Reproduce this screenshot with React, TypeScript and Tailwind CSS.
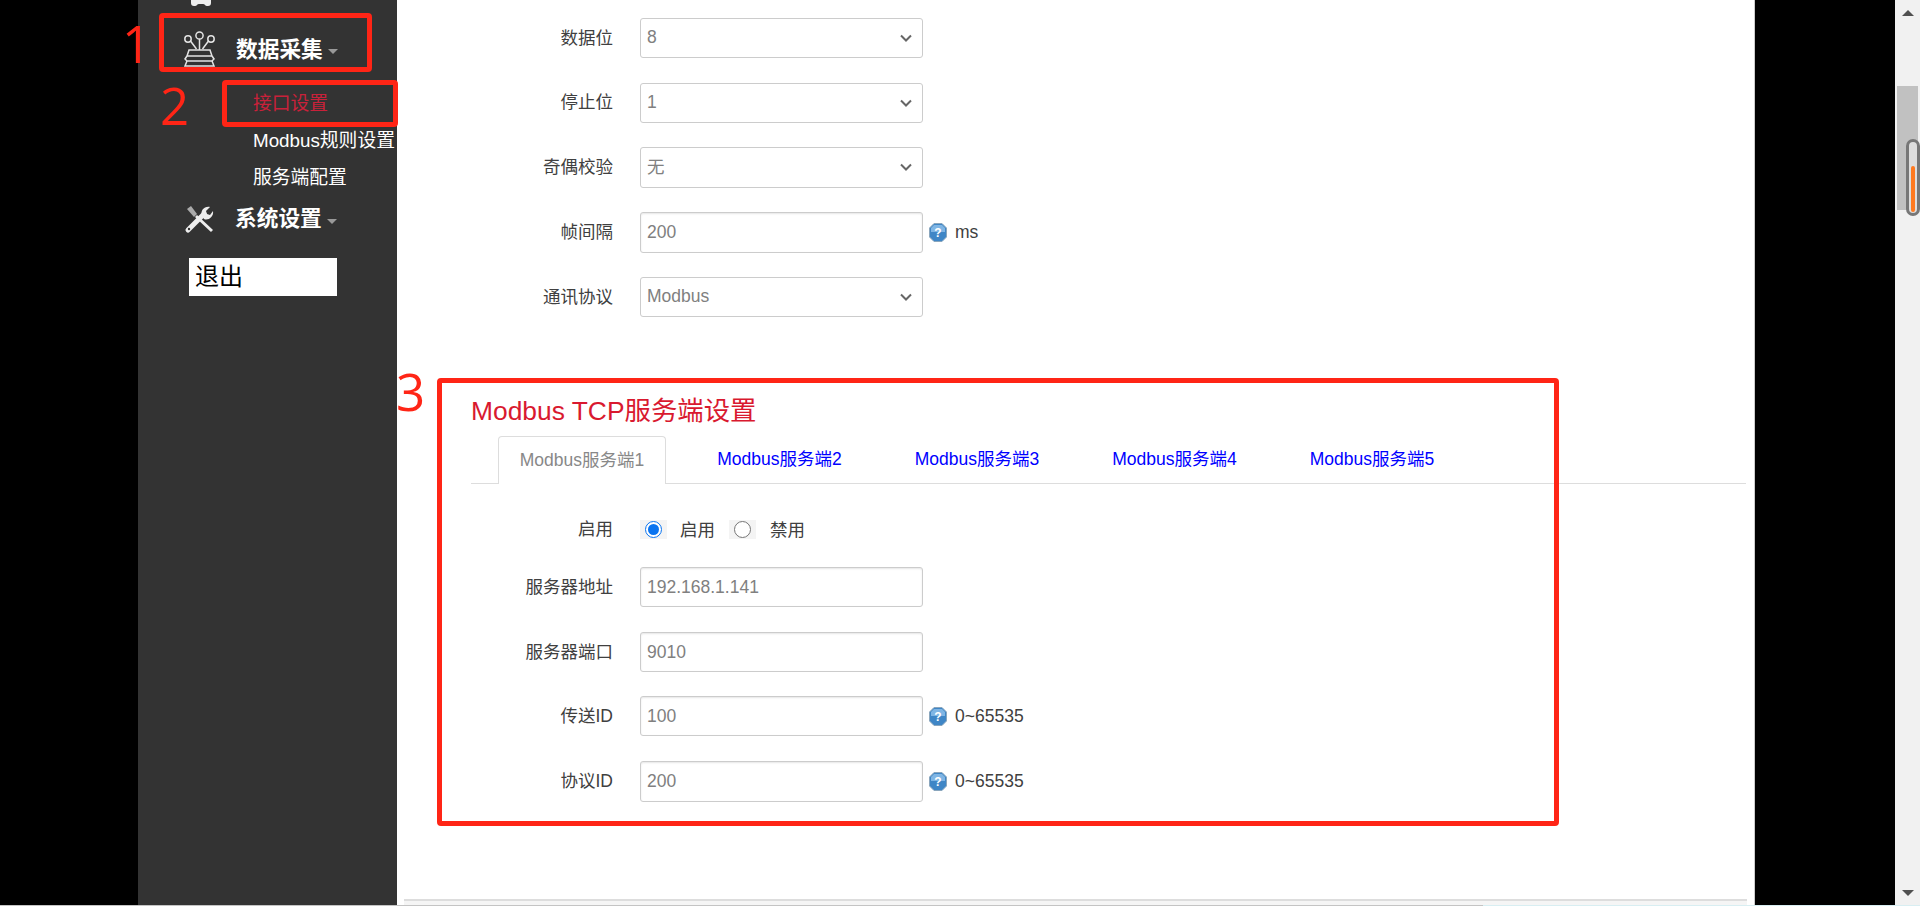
const Chevron = () => (
  <svg width="14" height="9" viewBox="0 0 14 9" fill="none" className="absolute right-[9px] top-1/2 -translate-y-1/2">
    <path d="M2 2l5 5 5-5" stroke="#666" strokeWidth="2" />
  </svg>
);

const HelpIcon = () => (
  <svg width="18" height="19" viewBox="0 0 18 19" className="shrink-0">
    <path d="M5 .5h8L17.5 5v9L13 18.5H5L.5 14V5z" fill="#3f86c6" stroke="#8aa6bd" />
    <path d="M5 2h8l3 3v4H2V5z" fill="#7fb5e4" />
    <text x="9" y="14" textAnchor="middle" fontSize="12" fontWeight="700" fill="#fff" fontFamily="Liberation Sans">?</text>
  </svg>
);

const TopIcon = () => (
  <svg width="22" height="6" viewBox="0 0 22 6" className="shrink-0">
    <path d="M1 0h20v3c0 2-1 3-3 3h-1c-2 0-2-2-4-2H9C7 4 7 6 5 6H4C2 6 1 5 1 3z" fill="#eee" />
  </svg>
);

const CollectIcon = () => (
  <svg width="37" height="36" viewBox="0 0 35 36" fill="none" stroke="#e4e4e4" strokeWidth="1.5" className="shrink-0">
    <circle cx="17.5" cy="4.5" r="3.6" />
    <circle cx="6" cy="8" r="3.2" />
    <circle cx="29" cy="8" r="3.2" />
    <path d="M17.5 8v11M8.5 10l6 8M26.5 10l-6 8" />
    <path d="M7 19h21l2 6H5zM5 25l-2 3 2 2h25l2-2-2-3M5 30l-2 5h29l-2-5" />
  </svg>
);

const ToolsIcon = () => (
  <svg width="30" height="30" viewBox="0 0 30 30" fill="none" className="shrink-0">
    <path d="M4 26L20 10" stroke="#eee" strokeWidth="5" strokeLinecap="round" />
    <path d="M18 12c-2-5 2-10 8-9l-4 4 1 3 3 1 3-4c1 6-5 10-9 8z" fill="#eee" />
    <path d="M3 5l4-3 6 8-3 3z" fill="#aaa" />
    <path d="M12 12l16 15" stroke="#eee" strokeWidth="3" />
    <circle cx="5" cy="25" r="1.2" fill="#333" />
  </svg>
);

const Caret = () => <span className="ml-[5px] mt-[5px] h-0 w-0 border-x-[5px] border-t-[5px] border-x-transparent border-t-[#999]" />;

const Label = ({ children }: { children: string }) => (
  <label className="w-[216px] shrink-0 text-right text-[#404040]">{children}</label>
);

const SelectRow = ({ label, value, h = 'h-10' }: { label: string; value: string; h?: string }) => (
  <div className={`flex items-center gap-[27px] ${h}`}>
    <Label>{label}</Label>
    <div className="relative flex h-full w-[283px] items-center rounded-[3px] border border-[#ccc] bg-white pb-px pl-1.5 text-[#808080]">
      {value}
      <Chevron />
    </div>
  </div>
);

const InputRow = ({ label, value, unit, h = 'h-10' }: { label: string; value: string; unit?: string; h?: string }) => (
  <div className={`flex items-center ${h}`}>
    <Label>{label}</Label>
    <div className="ml-[27px] flex h-full w-[283px] items-center rounded-[3px] border border-[#ccc] bg-white pl-1.5 text-[#808080] shadow-[inset_0_1px_2px_rgba(0,0,0,0.1)]">
      {value}
    </div>
    {unit && (
      <div className="ml-[6px] flex items-center gap-2 text-[#404040]">
        <HelpIcon />
        {unit}
      </div>
    )}
  </div>
);

const Radio = ({ checked }: { checked?: boolean }) => (
  <span className="flex h-[19px] w-[27px] items-center justify-center bg-[#f4f4f4]">
    <span className={`flex h-[17px] w-[17px] items-center justify-center rounded-full border bg-white ${checked ? 'border-[#0a74f0]' : 'border-[#767676]'}`}>
      {checked && <span className="h-[11px] w-[11px] rounded-full bg-[#0a74f0]" />}
    </span>
  </span>
);

const tabs = ['Modbus服务端2', 'Modbus服务端3', 'Modbus服务端4', 'Modbus服务端5'];

export default function App() {
  return (
    <div className="relative flex h-[906px] overflow-hidden bg-black text-[17.5px] font-['Liberation_Sans','Noto_Sans_CJK_SC',sans-serif]">
      <div className="w-[138px] shrink-0" />

      {/* Sidebar */}
      <aside className="w-[259px] shrink-0 overflow-hidden bg-[#333]">
        <div className="ml-[52px] flex h-[6px] items-start">
          <TopIcon />
          <span className="-mt-[19px] ml-[25px] text-[20px] leading-[20px] font-bold text-white">更新</span>
        </div>
        <div className="mt-[25px] ml-[43px] flex h-[36px] items-center">
          <CollectIcon />
          <span className="ml-[18px] mt-[2px] text-[21.7px] font-bold text-white">数据采集</span>
          <Caret />
        </div>
        <ul className="mt-[18px] ml-[115px] text-[18.8px] leading-[37px] text-white whitespace-nowrap">
          <li className="text-[#c9213a]">接口设置</li>
          <li>Modbus规则设置</li>
          <li>服务端配置</li>
        </ul>
        <div className="mt-[8px] ml-[46px] flex h-[30px] items-center">
          <ToolsIcon />
          <span className="ml-[21px] text-[21.7px] font-bold text-white">系统设置</span>
          <Caret />
        </div>
        <button className="mt-[24px] ml-[51px] block h-[38px] w-[148px] bg-white pl-[6px] text-left text-[24px] text-black">退出</button>
      </aside>

      {/* Main content */}
      <main className="flex flex-1 flex-col bg-white pt-[18px]">
        <div className="flex flex-col gap-[24.5px]">
          <SelectRow label="数据位" value="8" />
          <SelectRow label="停止位" value="1" />
          <SelectRow label="奇偶校验" value="无" h="h-[40.5px]" />
          <InputRow label="帧间隔" value="200" unit="ms" h="h-[40.5px]" />
          <SelectRow label="通讯协议" value="Modbus" />
        </div>

        <section className="ml-[74px] mr-[8px] mt-[76px]">
          <h3 className="text-[26.4px] leading-[36px] font-normal text-[#d9192f]">Modbus TCP服务端设置</h3>
          <div className="mt-[7px] flex h-[48px] gap-[29.5px] border-b border-[#ddd] pl-[27px]">
            <span className="flex h-[48px] w-[168px] items-center justify-center rounded-t-[4px] border border-b-0 border-[#ddd] bg-white text-[#888]">Modbus服务端1</span>
            {tabs.map((tab) => (
              <a key={tab} className="flex w-[168px] items-center justify-center text-[#0000ff]">{tab}</a>
            ))}
          </div>
        </section>

        <div className="mt-[33px] flex h-[24px] items-center">
          <Label>启用</Label>
          <div className="ml-[27px] flex items-center text-[#404040]">
            <Radio checked />
            <span className="ml-[13px] mr-[14px] mt-[2px]">启用</span>
            <Radio />
            <span className="ml-[14px] mt-[2px]">禁用</span>
          </div>
        </div>

        <div className="mt-[26px] flex flex-col gap-[24.7px]">
          <InputRow label="服务器地址" value="192.168.1.141" />
          <InputRow label="服务器端口" value="9010" />
          <InputRow label="传送ID" value="100" unit="0~65535" />
          <InputRow label="协议ID" value="200" unit="0~65535" h="h-[41px]" />
        </div>

        <footer className="mx-[7px] mt-auto h-[7px] border-t-2 border-[#ddd] bg-[#f5f5f5]" />
      </main>

      <div className="w-[141px] shrink-0 border-l border-[#ccc]" />

      {/* Browser scrollbar */}
      <div className="relative w-[25px] shrink-0 bg-[#f1f1f1]">
        <span className="absolute left-[7px] top-[10px] h-0 w-0 border-x-[6px] border-b-[6px] border-x-transparent border-b-[#505050]" />
        <div className="absolute left-[2px] top-[86px] h-[124px] w-[21px] bg-[#c1c1c1]" />
        <div className="absolute left-[11px] top-[139px] h-[77px] w-[14px] rounded-full border-[3px] border-[#777] bg-[#ddd]">
          <div className="absolute bottom-[1px] left-[2px] h-[46px] w-[4px] rounded-sm bg-[#ff7a20]" />
        </div>
        <span className="absolute left-[7px] top-[890px] h-0 w-0 border-x-[6px] border-t-[6px] border-x-transparent border-t-[#505050]" />
      </div>

      {/* Bottom edge of the capture */}
      <div className="absolute bottom-0 left-0 h-px w-full bg-[#d8eef2]" />
      <div className="absolute bottom-0 left-0 h-px w-[1483px] bg-[#c4c4c4]" />

      {/* Red annotations */}
      <div className="absolute left-[159px] top-[13px] h-[59px] w-[213px] rounded-[4px] border-[5px] border-[#ff2516]" />
      <div className="absolute left-[222px] top-[80px] h-[47px] w-[176px] rounded-[4px] border-[5px] border-[#ff2516]" />
      <div className="absolute left-[437px] top-[378px] h-[448px] w-[1122px] rounded-[4px] border-[5px] border-[#ff2516]" />
      <span className="absolute left-[122px] top-[13px] font-['Open_Sans',sans-serif] text-[51px] leading-[60px] text-[#ff2516]">1</span>
      <span className="absolute left-[160px] top-[75px] font-['Open_Sans',sans-serif] text-[51px] leading-[60px] text-[#ff2516]">2</span>
      <span className="absolute left-[396px] top-[361px] font-['Open_Sans',sans-serif] text-[51px] leading-[60px] text-[#ff2516]">3</span>
    </div>
  );
}
